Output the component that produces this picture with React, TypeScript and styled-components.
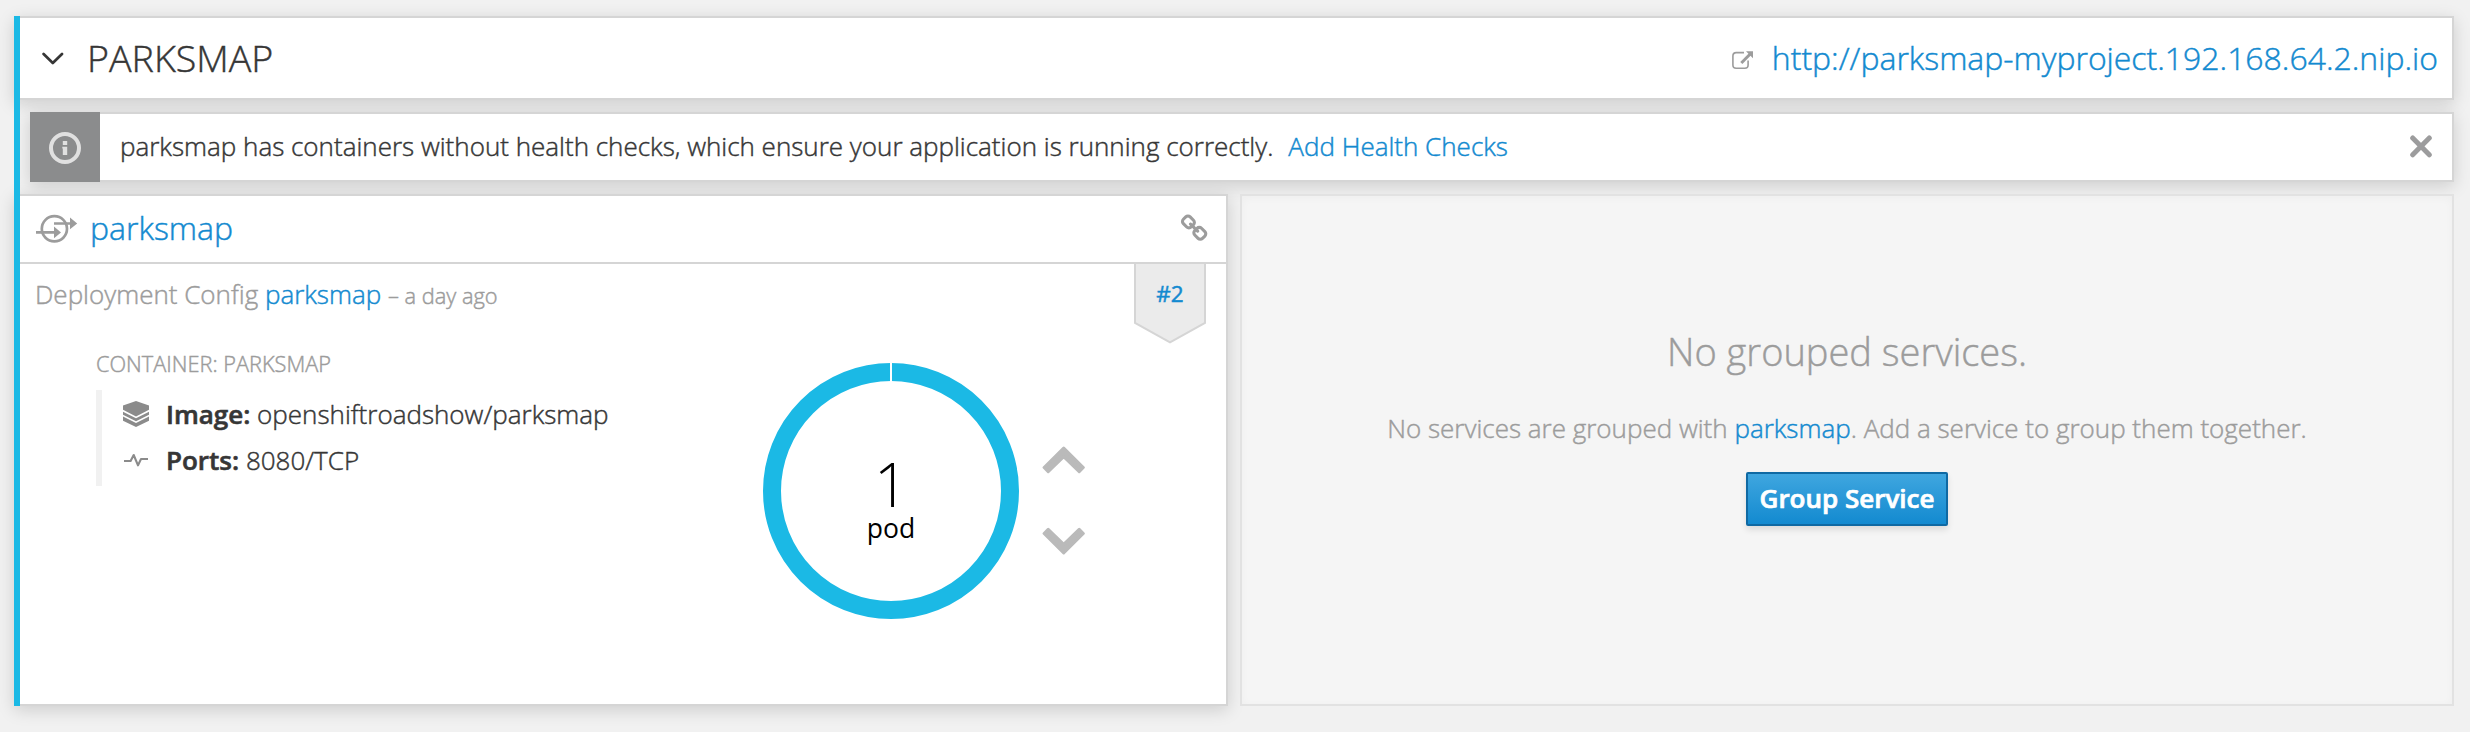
import React from "react";
import styled, { createGlobalStyle, ThemeProvider } from "styled-components";

const theme = {
  page: "#f1f1f1",
  border: "#d5d5d5",
  accent: "#1bb9e5",
  link: "#138ad0",
  text: "#363636",
  muted: "#9c9c9c",
  shadow: "0 4px 16px rgba(3, 3, 3, 0.15)",
};

const GlobalStyle = createGlobalStyle`
  * { box-sizing: border-box; }
  body {
    margin: 0;
    background: ${theme.page};
    color: ${theme.text};
    font: 300 26px/36px "Open Sans", "Noto Sans", sans-serif;
    -webkit-text-stroke: 0.45px;
  }
`;

const Page = styled.main`
  display: flex;
  width: 2470px;
  height: 732px;
  padding: 16px 16px 26px 14px;
  overflow: hidden;
`;

const Accent = styled.div`
  position: relative;
  z-index: 1;
  flex: 0 0 6px;
  background: ${(p) => p.theme.accent};
`;

const Content = styled.div`
  flex: 1;
  display: flex;
  flex-direction: column;
  gap: 12px;
`;

const ServiceHeader = styled.header`
  display: flex;
  align-items: center;
  justify-content: space-between;
  height: 84px;
  margin-left: -6px;
  padding: 0 14px 1px 28px;
  background: #fff;
  border: 2px solid ${(p) => p.theme.border};
  border-left: 0;
  box-shadow: ${(p) => p.theme.shadow};
`;

const HeaderSide = styled.div`
  display: flex;
  align-items: center;
`;

const Title = styled.h2`
  margin: 0 0 0 23px;
  font-size: 37.6px;
  line-height: 52px;
  font-weight: 300;
`;

const Link = styled.a<{ $size?: number }>`
  color: ${(p) => p.theme.link};
  text-decoration: none;
  font-size: ${(p) => p.$size ?? 26}px;
`;

const RouteLink = styled(Link)`
  margin-left: 18px;
  line-height: 44px;
`;

const Alert = styled.section`
  display: flex;
  height: 70px;
  margin-left: 10px;
  background: #fff;
  box-shadow: ${(p) => p.theme.shadow};
`;

const AlertIcon = styled.div`
  flex: 0 0 70px;
  display: flex;
  align-items: center;
  justify-content: center;
  padding-top: 2px;
  background: #8b8c8d;
`;

const AlertBody = styled.div`
  flex: 1;
  display: flex;
  align-items: center;
  padding: 0 20px 3px 20px;
  border: 2px solid ${(p) => p.theme.border};
  border-left: 0;
`;

const AlertLink = styled(Link)`
  margin-left: 15px;
`;

const CloseButton = styled.button`
  display: flex;
  margin: 2px 0 0 auto;
  padding: 0;
  border: 0;
  background: none;
`;

const Columns = styled.div`
  flex: 1;
  display: grid;
  grid-template-columns: 1214px 1214px;
  gap: 12px;
  margin-left: -6px;
`;

const Card = styled.section`
  background: #fff;
  border: 2px solid ${(p) => p.theme.border};
  border-left: 0;
  box-shadow: ${(p) => p.theme.shadow};
`;

const CardHeader = styled.div`
  display: flex;
  align-items: center;
  height: 68px;
  padding: 0 17px 2px 22px;
  border-bottom: 2px solid ${(p) => p.theme.border};
`;

const CardTitle = styled.h3`
  flex: 1;
  margin: 0 0 0 12px;
  font-weight: 300;
  line-height: 44px;
`;

const DeploymentRow = styled.div`
  display: flex;
  justify-content: space-between;
  height: 80px;
  padding: 0 20px 0 21px;
`;

const DeploymentName = styled.div`
  padding-top: 12px;
  color: ${(p) => p.theme.muted};
`;

const Age = styled.small`
  font-size: 21.8px;
`;

const PodRow = styled.div`
  display: flex;
  padding-left: 82px;
`;

const Details = styled.div`
  width: 667px;
  padding-top: 9px;
`;

const ContainerName = styled.div`
  margin-bottom: 15px;
  color: ${(p) => p.theme.muted};
  font-size: 21.75px;
  line-height: 22px;
  text-transform: uppercase;
`;

const Specs = styled.div`
  height: 96px;
  padding: 1px 0 0 20px;
  border-left: 6px solid #f1f1f1;
`;

const Spec = styled.div`
  display: flex;
  align-items: center;
  height: 46px;
  white-space: pre;
`;

const SpecIcon = styled.span`
  display: flex;
  justify-content: center;
  width: 28px;
  margin: -1px 16px 0 0;
`;

const Strong = styled.strong`
  font-weight: 600;
  -webkit-text-stroke: 0.6px;
`;

const Donut = styled.svg`
  margin-top: 19px;
  font-family: "Open Sans", "Noto Sans", sans-serif;
  -webkit-text-stroke: 0;
`;

const Scaler = styled.div`
  display: flex;
  flex-direction: column;
  gap: 53px;
  padding: 102px 0 0 23px;
`;

const EmptyPanel = styled.section`
  display: flex;
  flex-direction: column;
  align-items: center;
  padding-top: 131px;
  background: #f5f5f5;
  border: 2px solid #e2e2e2;
  box-shadow: inset 0 2px 8px rgba(3, 3, 3, 0.03);
  color: ${(p) => p.theme.muted};
`;

const EmptyTitle = styled.h2`
  margin: 0 0 35px;
  font-size: 38px;
  line-height: 48px;
  font-weight: 300;
`;

const EmptyText = styled.p`
  margin: 0 0 26px;
`;

const PrimaryButton = styled.button`
  width: 202px;
  height: 54px;
  padding: 0 0 3px;
  border: 2px solid #0f69a3;
  border-radius: 2px;
  background: linear-gradient(#3fa6df, #138ad0);
  box-shadow: 0 4px 6px rgba(3, 3, 3, 0.1);
  color: #fff;
  font: 600 26px/36px "Open Sans", "Noto Sans", sans-serif;
  -webkit-text-stroke: 0.7px;
  white-space: nowrap;
`;

const ChevronDown = () => (
  <svg width="22" height="14" viewBox="0 0 22 14" fill="none" stroke="#363636" strokeWidth="2.7" strokeLinecap="round" strokeLinejoin="round">
    <path d="M1.6 3 L10.8 12 L20 3" />
  </svg>
);

const ExternalIcon = () => (
  <svg width="22" height="24" viewBox="0 -4 22 24" fill="none" stroke="#9c9c9c">
    <path d="M12 2.6 H4.2 Q0.9 2.6 0.9 5.9 V14.9 Q0.9 18.2 4.2 18.2 H12.8 Q16.1 18.2 16.1 14.9 V10.4" strokeWidth="1.6" />
    <path d="M9.3 13 L18 4.3" strokeWidth="3" />
    <path d="M14 1.2 H21 V8.2 Z" fill="#9c9c9c" stroke="none" />
  </svg>
);

const InfoIcon = () => (
  <svg width="32" height="32" viewBox="0 0 32 32">
    <circle cx="16" cy="16" r="14" fill="none" stroke="#e0e0e0" strokeWidth="4" />
    <path d="M13.8 9 H18.2 V13 H13.8 Z M13.3 14.8 H18.2 V23 H13.8 V16.6 H13.3 Z" fill="#e0e0e0" />
  </svg>
);

const CloseIcon = () => (
  <svg width="22" height="23" viewBox="0 0 22 23" fill="none" stroke="#9c9c9d" strokeWidth="5" strokeLinecap="round">
    <path d="M2.7 3 L19.3 19.8 M19.3 3 L2.7 19.8" />
  </svg>
);

const ServiceIcon = () => (
  <svg width="42" height="28" viewBox="0 -0.8 42 28" overflow="visible" fill="#9c9c9c">
    <circle cx="18.4" cy="14" r="12.6" fill="none" stroke="#9c9c9c" strokeWidth="2.7" />
    <path d="M0 16.3 H18 V11.8 L25 17.6 L18 23.4 V18.9 H0 Z" />
    <path d="M18 7.4 H34 V2.8 L41.2 8.6 L34 14.4 V10 H18 Z" />
  </svg>
);

const ChainIcon = () => (
  <svg width="29" height="29" viewBox="-40 -10 1792 1792" fill="#9c9c9c">
    <path d="M1456 1216q0-40-28-68l-208-208q-28-28-68-28-42 0-72 32 3 3 19 18.5t21.5 21.5 15 19 13 25.5 3.5 27.5q0 40-28 68t-68 28q-15 0-27.5-3.5t-25.5-13-19-15-21.5-21.5-18.5-19q-33 31-33 73 0 40 28 68l206 207q27 27 68 27 40 0 68-26l147-146q28-28 28-67zm-703-705q0-40-28-68l-206-207q-28-28-68-28-39 0-68 27l-147 146q-28 28-28 67 0 40 28 68l208 208q27 27 68 27 42 0 72-31-3-3-19-18.5t-21.5-21.5-15-19-13-25.5-3.5-27.5q0-40 28-68t68-28q15 0 27.5 3.5t25.5 13 19 15 21.5 21.5 18.5 19q33-31 33-73zm895 705q0 120-85 203l-147 146q-83 83-203 83-121 0-204-85l-206-207q-83-83-83-203 0-123 88-209l-88-88q-86 88-208 88-120 0-204-84l-208-208q-84-84-84-204t85-203l147-146q83-83 203-83 121 0 204 85l206 207q83 83 83 203 0 123-88 209l88 88q86-88 208-88 120 0 204 84l208 208q84 84 84 204z" />
  </svg>
);

const LayersIcon = () => (
  <svg width="26" height="26" viewBox="0 0 26 26" fill="#8b8b8b">
    <path d="M13 0 L26 4.6 V8.8 L13 15.4 L0 8.8 V4.6 Z" />
    <path d="M0 10.7 L13 17.3 L26 10.7 V13.7 L13 20.2 L0 13.7 Z" />
    <path d="M0 15.5 L13 22 L26 15.5 V19.8 L13 26 L0 19.8 Z" />
  </svg>
);

const PulseIcon = () => (
  <svg width="24" height="14" viewBox="0 0 24 14" fill="none" stroke="#8b8b8b" strokeWidth="2.1" strokeLinejoin="round">
    <path d="M0 8 H6.6 L9.7 2 L14 12.4 L17 6 H24" />
  </svg>
);

const ScaleArrow = ({ down = false }: { down?: boolean }) => (
  <svg width="44" height="28" viewBox="0 0 44 28" fill="#bababa" stroke="#bababa" strokeWidth="3" strokeLinejoin="round">
    <path
      d={
        down
          ? "M21.7 25.9 L2.1 6.5 L6.2 2.4 L21.7 17.4 L37.2 2.4 L41.3 6.5 Z"
          : "M21.7 2.1 L2.1 21.5 L6.2 25.6 L21.7 10.6 L37.2 25.6 L41.3 21.5 Z"
      }
    />
  </svg>
);

const RevisionText = styled.text`
  fill: ${(p) => p.theme.link};
  stroke: ${(p) => p.theme.link};
  stroke-width: 0.5px;
  font: 400 22.5px "Open Sans", "Noto Sans", sans-serif;
  text-anchor: middle;
`;

const RevisionBadge = () => (
  <svg width="72" height="80" viewBox="0 0 72 80">
    <path d="M1 -2 V58.8 L36 78.4 L71 58.8 V-2 Z" fill="#ebebeb" stroke="#d5d5d5" strokeWidth="2" />
    <RevisionText x="36" y="38">#2</RevisionText>
  </svg>
);

export default function App() {
  return (
    <ThemeProvider theme={theme}>
      <GlobalStyle />
      <Page>
        <Accent />
        <Content>
          <ServiceHeader>
            <HeaderSide>
              <ChevronDown />
              <Title>PARKSMAP</Title>
            </HeaderSide>
            <HeaderSide>
              <ExternalIcon />
              <RouteLink $size={31.95}>http://parksmap-myproject.192.168.64.2.nip.io</RouteLink>
            </HeaderSide>
          </ServiceHeader>

          <Alert>
            <AlertIcon>
              <InfoIcon />
            </AlertIcon>
            <AlertBody>
              parksmap has containers without health checks, which ensure your application is running correctly.
              <AlertLink>Add Health Checks</AlertLink>
              <CloseButton aria-label="Close">
                <CloseIcon />
              </CloseButton>
            </AlertBody>
          </Alert>

          <Columns>
            <Card>
              <CardHeader>
                <ServiceIcon />
                <CardTitle>
                  <Link $size={32}>parksmap</Link>
                </CardTitle>
                <ChainIcon />
              </CardHeader>
              <DeploymentRow>
                <DeploymentName>
                  Deployment Config <Link>parksmap</Link> <Age>– a day ago</Age>
                </DeploymentName>
                <RevisionBadge />
              </DeploymentRow>
              <PodRow>
                <Details>
                  <ContainerName>Container: parksmap</ContainerName>
                  <Specs>
                    <Spec>
                      <SpecIcon>
                        <LayersIcon />
                      </SpecIcon>
                      <Strong>Image:</Strong> openshiftroadshow/parksmap
                    </Spec>
                    <Spec>
                      <SpecIcon>
                        <PulseIcon />
                      </SpecIcon>
                      <Strong>Ports:</Strong> 8080/TCP
                    </Spec>
                  </Specs>
                </Details>
                <Donut width="256" height="256" viewBox="0 0 256 256">
                  <circle cx="128" cy="128" r="119" fill="none" stroke="#1bb9e5" strokeWidth="18" />
                  <path d="M128 0 V19" stroke="#fff" strokeWidth="2" />
                  <text x="128" y="144" textAnchor="middle" fontSize="60" fontWeight="300" fill="#000">1</text>
                  <text x="128" y="175" textAnchor="middle" fontSize="26.5" fontWeight="400" fill="#000">pod</text>
                </Donut>
                <Scaler>
                  <ScaleArrow />
                  <ScaleArrow down />
                </Scaler>
              </PodRow>
            </Card>

            <EmptyPanel>
              <EmptyTitle>No grouped services.</EmptyTitle>
              <EmptyText>
                No services are grouped with <Link>parksmap</Link>. Add a service to group them together.
              </EmptyText>
              <PrimaryButton>Group Service</PrimaryButton>
            </EmptyPanel>
          </Columns>
        </Content>
      </Page>
    </ThemeProvider>
  );
}
